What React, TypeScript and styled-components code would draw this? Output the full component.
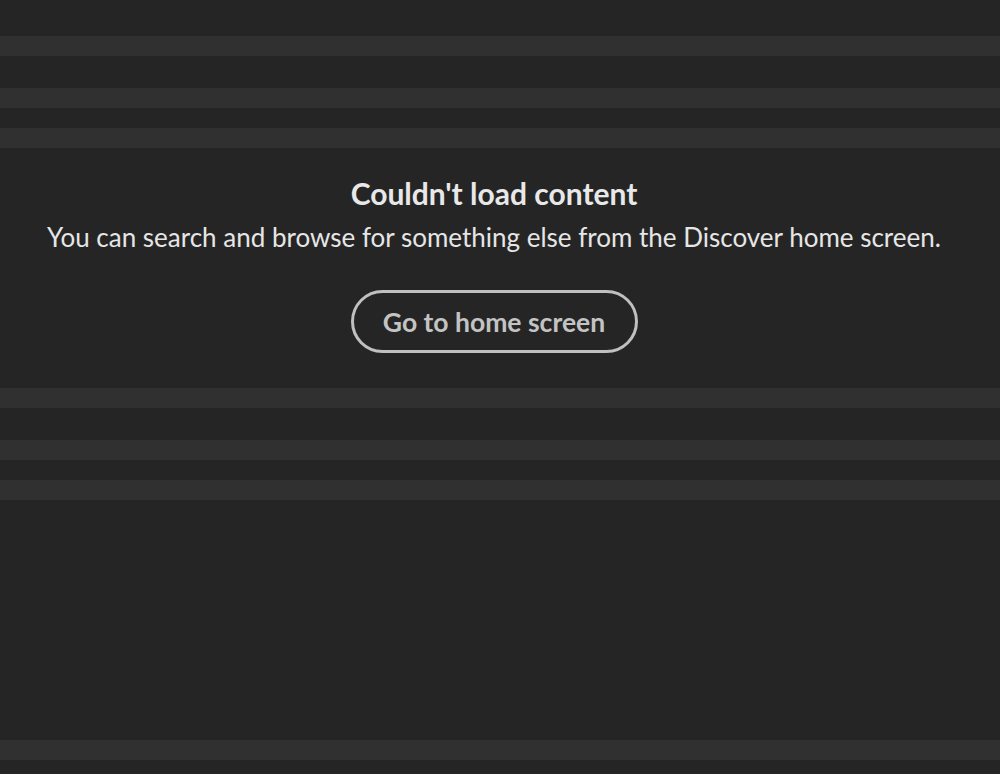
import React from 'react';
import styled, { createGlobalStyle } from 'styled-components';

const GlobalStyle = createGlobalStyle`
  html, body {
    margin: 0;
    padding: 0;
    background: #252525;
  }
  body {
    font-family: Lato, 'Open Sans', sans-serif;
    -webkit-font-smoothing: antialiased;
  }
`;

const Page = styled.div`
  width: 1000px;
  height: 774px;
  overflow: hidden;
  background: #252525;
  padding-top: 36px;
  box-sizing: border-box;
  display: flex;
  flex-direction: column;
`;

const SkeletonGroup = styled.div`
  display: flex;
  flex-direction: column;
  flex-shrink: 0;
`;

const Bar = styled.div<{ $gap?: number }>`
  height: 20px;
  flex-shrink: 0;
  background: #303030;
  margin-top: ${(p) => p.$gap ?? 0}px;
`;

const ErrorBlock = styled.div`
  height: 240px;
  flex-shrink: 0;
  display: flex;
  flex-direction: column;
  align-items: center;
  padding: 26px 12px 0 0;
  box-sizing: border-box;
`;

const Spacer = styled.div`
  height: 240px;
  flex-shrink: 0;
`;

const Title = styled.h2`
  margin: 0;
  font-size: 30px;
  font-weight: 700;
  color: #e8e8e8;
  line-height: 38px;
`;

const Message = styled.p`
  margin: 8px 0 0;
  font-size: 26px;
  color: #e6e6e6;
  line-height: 34px;
  white-space: nowrap;
`;

const HomeButton = styled.button`
  margin-top: 36px;
  width: 287px;
  height: 63px;
  border: 3px solid #c0c0c0;
  border-radius: 32px;
  background: transparent;
  color: #c3c3c3;
  font-family: inherit;
  font-size: 26.5px;
  font-weight: 700;
  cursor: pointer;
  padding: 0;
`;

const Skeleton: React.FC = () => (
  <SkeletonGroup>
    <Bar />
    <Bar $gap={32} />
    <Bar $gap={20} />
  </SkeletonGroup>
);

const App: React.FC = () => {
  return (
    <>
      <GlobalStyle />
      <Page>
        <Skeleton />
        <ErrorBlock>
          <Title>Couldn't load content</Title>
          <Message>You can search and browse for something else from the Discover home screen.</Message>
          <HomeButton type="button">Go to home screen</HomeButton>
        </ErrorBlock>
        <Skeleton />
        <Spacer />
        <Skeleton />
      </Page>
    </>
  );
};

export default App;
